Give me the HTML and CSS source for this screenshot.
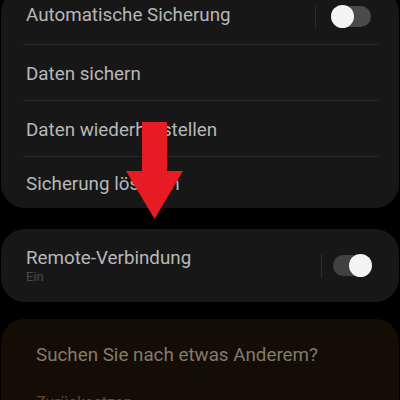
FILE: index.html
```html
<!DOCTYPE html>
<html lang="de">
<head>
<meta charset="utf-8">
<link rel="stylesheet" href="styles.css">
</head>
<body>
<div class="screen">
  <section class="card card-backup">
    <div class="row first">
      <span class="label">Automatische Sicherung</span>
      <div class="switch-wrap">
        <span class="sep"></span>
        <span class="switch off"><span class="thumb"></span></span>
      </div>
    </div>
    <div class="row"><span class="label">Daten sichern</span></div>
    <div class="row"><span class="label">Daten wiederherstellen</span></div>
    <div class="row last"><span class="label">Sicherung löschen</span></div>
  </section>

  <section class="card card-remote">
    <div class="remote-text">
      <div class="label">Remote-Verbindung</div>
      <div class="sub">Ein</div>
    </div>
    <div class="switch-wrap wide">
      <span class="sep"></span>
      <span class="switch on"><span class="thumb"></span></span>
    </div>
  </section>

  <section class="card card-more">
    <div class="more-title">Suchen Sie nach etwas Anderem?</div>
    <div class="more-link">Zurücksetzen</div>
  </section>

  <svg class="arrow" width="400" height="400" viewBox="0 0 400 400">
    <polygon points="142,122 167,122 167,171 183,171 154.5,219 126,171 142,171" fill="#e61b23"/>
  </svg>
</div>
</body>
</html>
```

FILE: styles.css
```css
html, body {
  margin: 0;
  padding: 0;
  background: #000;
}
body {
  font-family: Roboto, "Noto Sans", "Liberation Sans", sans-serif;
  width: 400px;
  height: 400px;
  overflow: hidden;
}
.screen {
  position: relative;
  width: 400px;
  height: 400px;
  overflow: hidden;
}
.card {
  background: #171717;
  border-radius: 24px;
  margin: 0 1px;
}
.card-backup {
  margin-top: -11px;
}
.row {
  height: 56px;
  margin: 0 20px 0 22px;
  padding: 3px 8px 0 3px;
  box-sizing: border-box;
  border-bottom: 1px solid #262626;
  display: flex;
  align-items: center;
  justify-content: space-between;
}
.row.first {
  padding-top: 0;
}
.row.first .label {
  margin-top: -3px;
}
.row.last {
  height: 51px;
  border-bottom: none;
}
.label {
  color: #b8b8b8;
  font-size: 18.8px;
}
.switch-wrap {
  display: flex;
  align-items: center;
  gap: 16px;
}
.switch-wrap.wide {
  gap: 11px;
}
.sep {
  width: 1px;
  height: 24px;
  background: #2c2c2c;
}
.switch {
  position: relative;
  width: 39px;
  height: 21px;
  border-radius: 11px;
  background: #4b4b4b;
  display: block;
}
.switch.on {
  background: #414141;
}
.thumb {
  position: absolute;
  top: -1px;
  width: 23px;
  height: 23px;
  border-radius: 50%;
  background: #f4f4f4;
}
.switch.off .thumb {
  left: -1px;
}
.switch.on .thumb {
  right: 0;
}
.card-remote {
  margin-top: 21px;
  height: 73px;
  display: flex;
  align-items: center;
  justify-content: space-between;
  padding: 0 27px 0 25px;
  box-sizing: border-box;
}
.remote-text .label {
  display: block;
  line-height: 22px;
}
.sub {
  color: #4a4a4a;
  font-size: 13px;
  line-height: 16px;
}
.card-more {
  margin-top: 17px;
  background: #140d05;
  height: 120px;
  padding: 24px 0 0 35px;
  box-sizing: border-box;
}
.more-title {
  color: #857a6c;
  font-size: 18.8px;
  line-height: 24px;
}
.more-link {
  margin-top: 26px;
  color: #6e4520;
  font-size: 16px;
  line-height: 20px;
}
.arrow {
  position: absolute;
  left: 0;
  top: 0;
  pointer-events: none;
}
```
